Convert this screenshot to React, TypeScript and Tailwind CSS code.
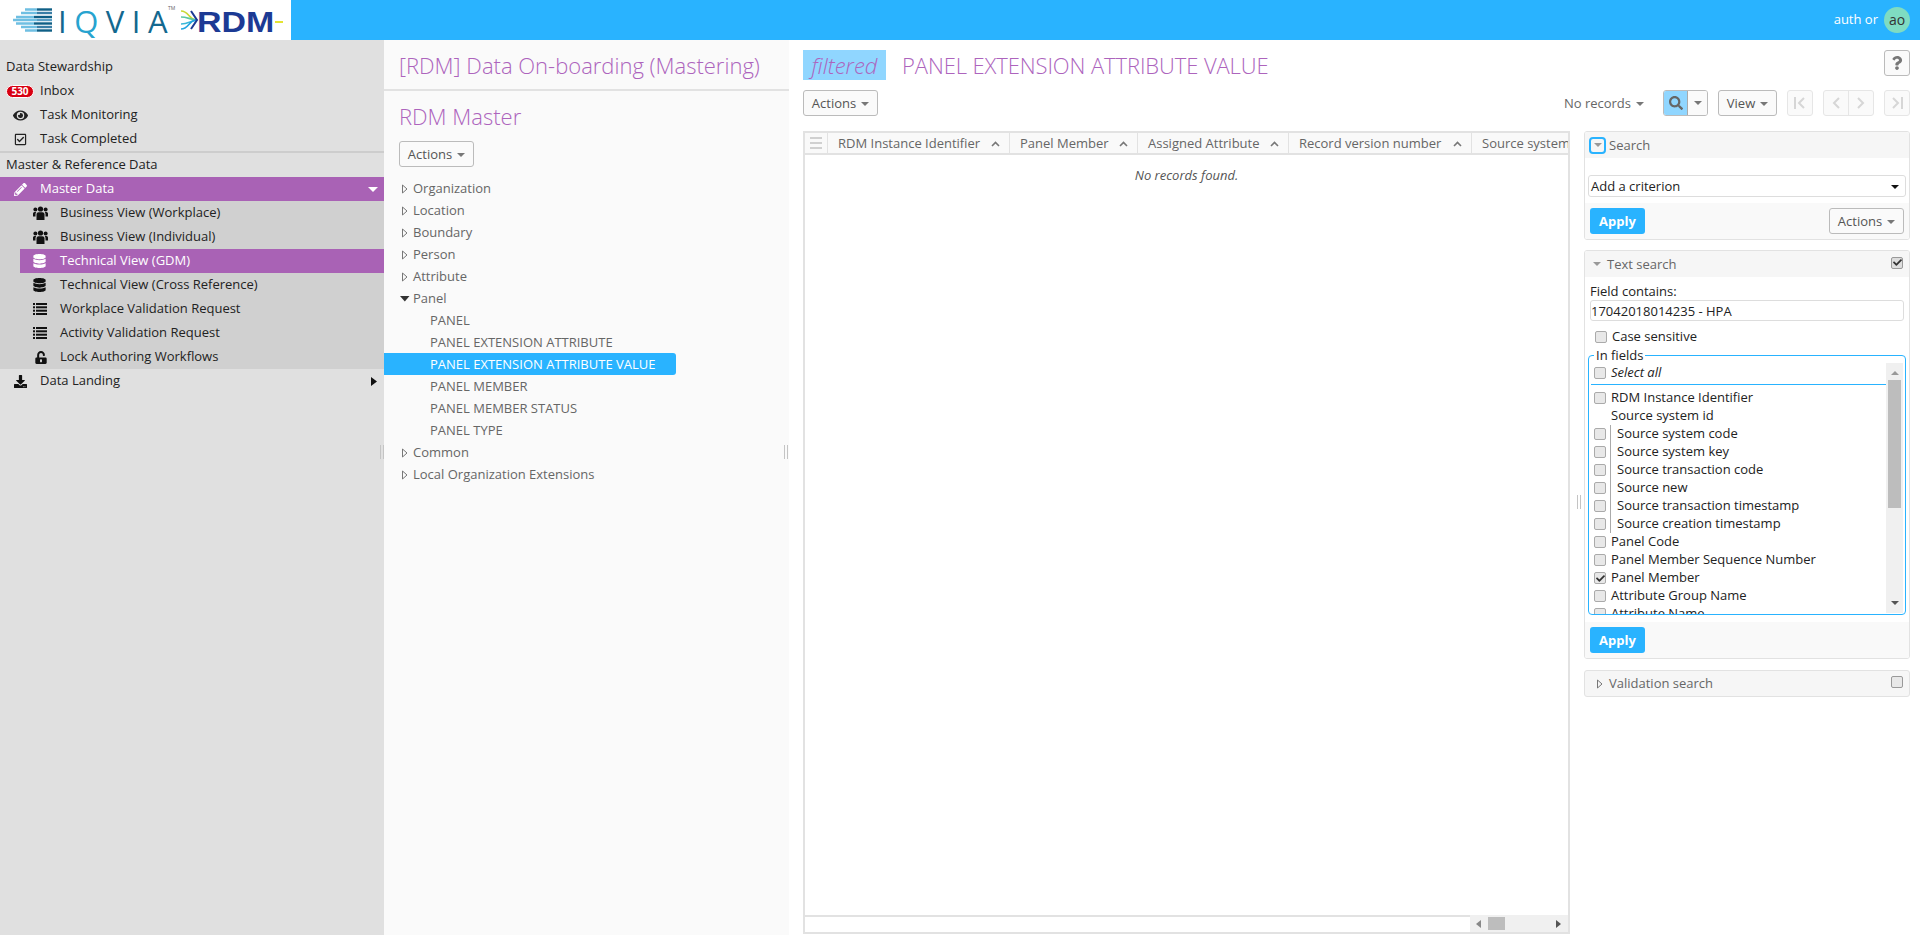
import { FaPencilAlt, FaEye, FaRegCheckSquare, FaDatabase, FaUnlockAlt, FaDownload, FaSearch, FaCheck, FaQuestion } from 'react-icons/fa';
import type { ReactNode } from 'react';

const font = "font-['Open_Sans',sans-serif]";

const Caret = ({ className = 'text-[#777]' }: { className?: string }) => (
  <svg width="8" height="4" viewBox="0 0 8 4" className={className}>
    <path d="M0 0h8L4 4z" fill="currentColor" />
  </svg>
);

const TreeArrow = ({ open = false }: { open?: boolean }) =>
  open ? (
    <svg width="10" height="10" viewBox="0 0 10 10" className="shrink-0">
      <path d="M0 2h9.5L4.8 7.5z" fill="#333" />
    </svg>
  ) : (
    <svg width="10" height="10" viewBox="0 0 10 10" className="shrink-0">
      <path d="M2.5 1 7 5 2.5 9z" fill="none" stroke="#777" />
    </svg>
  );

const UsersIcon = ({ className }: { className: string }) => (
  <svg viewBox="0 0 15 14" className={className}>
    <g fill="currentColor">
      <circle cx="7.5" cy="3" r="2.6" />
      <circle cx="2.4" cy="3.6" r="2" />
      <circle cx="12.6" cy="3.6" r="2" />
      <path d="M3.5 14V8.5c0-1.4 1-2.3 2-2.3h4c1 0 2 .9 2 2.3V14z" />
      <path d="M0 10.5V7.8c0-1 .7-1.8 1.5-1.8h1.8C2.7 6.600 2.500 7.500 2.500 8.500v2z" />
      <path d="M15 10.500V7.800c0-1-.7-1.800-1.500-1.800h-1.800c.6.600.8 1.500.8 2.500v2z" />
    </g>
  </svg>
);

const ListIcon = ({ className }: { className: string }) => (
  <svg viewBox="0 0 14 12" className={className}>
    <g fill="currentColor">
      <rect x="0" y="0" width="2" height="2" />
      <rect x="3" y="0" width="11" height="2" />
      <rect x="0" y="3.300" width="2" height="2" />
      <rect x="3" y="3.300" width="11" height="2" />
      <rect x="0" y="6.700" width="2" height="2" />
      <rect x="3" y="6.700" width="11" height="2" />
      <rect x="0" y="10" width="2" height="2" />
      <rect x="3" y="10" width="11" height="2" />
    </g>
  </svg>
);

const ActionsButton = () => (
  <button className="h-[26px] w-[75px] shrink-0 pt-[2px] rounded-[3px] border border-[#bbb] bg-[#fafafa] flex items-center justify-center gap-[5px] text-[13px] text-[#555]">
    Actions <Caret />
  </button>
);

const ApplyButton = () => (
  <button className="h-[26px] w-[55px] pt-[1px] rounded-[3px] bg-[#29b3ff] text-white text-[13px] font-bold">Apply</button>
);

const Check = ({ checked = false }: { checked?: boolean }) => (
  <span className="w-[12px] h-[12px] shrink-0 rounded-[2px] border border-[#aaa] bg-[#e8e8e8] flex items-center justify-center">
    {checked && <FaCheck className="w-[9px] h-[9px] text-[#333]" />}
  </span>
);

const NavItem = ({ icon, label, active, children }: { icon: ReactNode; label: string; active?: boolean; children?: ReactNode }) => (
  <div className={`h-6 flex items-center text-[13px] ${active ? 'bg-[#a962b5] text-white' : 'text-[#222]'}`}>
    <span className="w-10 flex justify-center shrink-0">{icon}</span>
    <span className="flex-1">{label}</span>
    {children}
  </div>
);

const SubItem = ({ icon, label, active }: { icon: ReactNode; label: string; active?: boolean }) => (
  <div className={`h-6 ml-5 flex items-center text-[13px] ${active ? 'bg-[#a962b5] text-white' : 'text-[#222]'}`}>
    <span className="w-10 pl-[13px] shrink-0 flex">{icon}</span>
    <span>{label}</span>
  </div>
);

const Sidebar = () => (
  <div className="w-[384px] shrink-0 bg-[#e0e0e0] pt-[15px]">
    <div className="h-6 pl-[6px] flex items-center text-[13px] text-[#222]">Data Stewardship</div>
    <NavItem
      label="Inbox"
      icon={<span className="px-[4px] h-[13px] rounded-full bg-[#d80012] border border-white text-white text-[10px] leading-[11px] font-bold">530</span>}
    />
    <NavItem label="Task Monitoring" icon={<FaEye className="w-[15px] h-[15px] text-[#222]" />} />
    <NavItem label="Task Completed" icon={<FaRegCheckSquare className="w-[13px] h-[13px] text-[#222]" />} />
    <div className="h-[2px] bg-[#cdcdcd]" />
    <div className="h-6 pl-[6px] flex items-center text-[13px] text-[#222]">Master &amp; Reference Data</div>
    <NavItem label="Master Data" active icon={<FaPencilAlt className="w-[13px] h-[13px] text-white" />}>
      <span className="pr-[6px] flex">
        <Caret className="text-white w-[10px] h-[5px]" />
      </span>
    </NavItem>
    <div className="bg-[#d0d0d0]">
      <SubItem label="Business View (Workplace)" icon={<UsersIcon className="w-[15px] h-[14px] text-[#111]" />} />
      <SubItem label="Business View (Individual)" icon={<UsersIcon className="w-[15px] h-[14px] text-[#111]" />} />
      <SubItem label="Technical View (GDM)" active icon={<FaDatabase className="w-[13px] h-[14px] text-white" />} />
      <SubItem label="Technical View (Cross Reference)" icon={<FaDatabase className="w-[13px] h-[14px] text-[#111]" />} />
      <SubItem label="Workplace Validation Request" icon={<ListIcon className="w-[14px] h-[12px] text-[#111]" />} />
      <SubItem label="Activity Validation Request" icon={<ListIcon className="w-[14px] h-[12px] text-[#111]" />} />
      <SubItem label="Lock Authoring Workflows" icon={<FaUnlockAlt className="w-[12px] h-[13px] ml-[2px] text-[#111]" />} />
    </div>
    <NavItem label="Data Landing" icon={<FaDownload className="w-[13px] h-[13px] text-[#111]" />}>
      <svg width="6" height="9" viewBox="0 0 6 9" className="mr-[7px]">
        <path d="M0 0l6 4.5L0 9z" fill="#111" />
      </svg>
    </NavItem>
  </div>
);

const treeTop = ['Organization', 'Location', 'Boundary', 'Person', 'Attribute'];
const treeChildren = ['PANEL', 'PANEL EXTENSION ATTRIBUTE', 'PANEL EXTENSION ATTRIBUTE VALUE', 'PANEL MEMBER', 'PANEL MEMBER STATUS', 'PANEL TYPE'];

const TreeRow = ({ label, open }: { label: string; open?: boolean }) => (
  <div className="h-[22px] pt-[2px] pl-[16px] flex items-center gap-[3px] text-[13px] text-[#666]">
    <TreeArrow open={open} />
    <span>{label}</span>
  </div>
);

const TreePanel = () => (
  <div className="w-[405px] shrink-0 bg-[#fafafa]">
    <div className="h-[51px] border-b-2 border-[#e2e2e2] pl-[15px] pt-[8px] text-[22px] leading-[34px] font-light text-[#ad64bd]">
      [RDM] Data On-boarding (Mastering)
    </div>
    <div className="pl-[15px] pt-[8px] text-[22px] leading-[34px] font-light text-[#ad64bd]">RDM Master</div>
    <div className="pl-[15px] mt-[8px] mb-[10px]">
      <ActionsButton />
    </div>
    {treeTop.map((t) => (
      <TreeRow key={t} label={t} />
    ))}
    <TreeRow label="Panel" open />
    {treeChildren.map((c, i) => (
      <div
        key={c}
        className={`h-[22px] w-[292px] pt-[2px] pl-[46px] flex items-center text-[13px] rounded-r-[3px] ${i === 2 ? 'bg-[#29b3ff] text-white' : 'text-[#666]'}`}
      >
        {c}
      </div>
    ))}
    <TreeRow label="Common" />
    <TreeRow label="Local Organization Extensions" />
  </div>
);

const columns = [
  { label: 'RDM Instance Identifier', w: 'w-[182px]' },
  { label: 'Panel Member', w: 'w-[128px]' },
  { label: 'Assigned Attribute', w: 'w-[151px]' },
  { label: 'Record version number', w: 'w-[183px]' },
];

const SortArrow = () => (
  <svg width="9" height="6" viewBox="0 0 9 6" className="shrink-0">
    <path d="M1 5l3.500-3.500L8 5" fill="none" stroke="#777" strokeWidth="1.600" />
  </svg>
);

const DataTable = () => (
  <div className="flex-1 flex flex-col mt-[15px] mb-px min-h-0 border-2 border-[#e2e2e2] text-[13px]">
    <div className="h-[22px] shrink-0 flex border-b-2 border-[#e2e2e2] bg-[#f9f9f9] text-[#666] overflow-hidden">
      <div className="w-[23px] shrink-0 border-r border-[#e2e2e2] flex flex-col justify-center gap-[3px] px-[5px]">
        <span className="h-[2px] bg-[#d0d0d0]" />
        <span className="h-[2px] bg-[#d0d0d0]" />
        <span className="h-[2px] bg-[#d0d0d0]" />
      </div>
      {columns.map((c) => (
        <div key={c.label} className={`${c.w} shrink-0 border-r border-[#e2e2e2] pt-[2px] pl-[10px] pr-[9px] flex items-center justify-between`}>
          <span className="whitespace-nowrap">{c.label}</span>
          <SortArrow />
        </div>
      ))}
      <div className="pl-[10px] pt-[2px] whitespace-nowrap flex items-center">Source system key</div>
    </div>
    <div className="flex-1 text-center italic text-[#555] pt-[11px] leading-[18px]">No records found.</div>
    <div className="h-[17px] shrink-0 flex border-t-2 border-[#e2e2e2]">
      <div className="flex-1" />
      <div className="w-[98px] -mt-[2px] bg-[#f0f0f0] flex items-center pl-[6px] pr-[7px]">
        <svg width="5" height="8" viewBox="0 0 5 8">
          <path d="M5 0v8L0 4z" fill="#888" />
        </svg>
        <span className="ml-[7px] w-[17px] h-[13px] bg-[#bdbdbd]" />
        <svg width="5" height="8" viewBox="0 0 5 8" className="ml-auto">
          <path d="M0 0v8l5-4z" fill="#555" />
        </svg>
      </div>
    </div>
  </div>
);

const PageIcon = ({ d }: { d: string }) => (
  <svg width="14" height="14" viewBox="0 0 14 14">
    <path d={d} fill="none" stroke="#d6d6d6" strokeWidth="2" />
  </svg>
);

const Toolbar = () => (
  <div className="mt-[4px] flex items-center h-[26px] shrink-0">
    <ActionsButton />
    <div className="ml-auto pt-[2px] flex items-center gap-[5px] text-[13px] text-[#666]">
      No records <Caret />
    </div>
    <div className="ml-[19px] flex h-[26px] rounded-[3px] border border-[#bbb] overflow-hidden">
      <span className="w-[24px] bg-[#90d6ff] border-r border-[#aaa] flex items-center justify-center">
        <FaSearch className="w-[14px] h-[14px] text-[#666]" />
      </span>
      <span className="w-[19px] bg-[#fafafa] flex items-center justify-center">
        <Caret />
      </span>
    </div>
    <button className="ml-[10px] h-[26px] w-[59px] pt-[2px] rounded-[3px] border border-[#bbb] bg-[#fafafa] flex items-center justify-center gap-[5px] text-[13px] text-[#555]">
      View <Caret />
    </button>
    <span className="ml-[10px] w-[26px] h-[26px] rounded-[3px] border border-[#e6e6e6] bg-[#fafafa] flex items-center justify-center">
      <PageIcon d="M2 1v12M11 2 6 7l5 5" />
    </span>
    <div className="ml-[10px] flex w-[51px] h-[26px] rounded-[3px] border border-[#e6e6e6] bg-[#fafafa]">
      <span className="flex-1 border-r border-[#e6e6e6] flex items-center justify-center">
        <PageIcon d="M10 2 5 7l5 5" />
      </span>
      <span className="flex-1 flex items-center justify-center">
        <PageIcon d="M4 2l5 5-5 5" />
      </span>
    </div>
    <span className="ml-[10px] w-[26px] h-[26px] rounded-[3px] border border-[#e6e6e6] bg-[#fafafa] flex items-center justify-center">
      <PageIcon d="M12 1v12M3 2l5 5-5 5" />
    </span>
  </div>
);

const CenterPanel = () => (
  <div className="flex-1 min-w-0 flex flex-col bg-white pl-[14px]">
    <div className="flex items-start justify-between pt-[10px] pr-[10px] h-[46px] shrink-0">
      <div className="flex items-center gap-[16px]">
        <span className="w-[83px] h-[30px] bg-[#90d6ff] text-center italic font-light text-[22px] leading-[30px] text-[#ad64bd]">filtered</span>
        <span className="text-[22px] leading-[30px] font-light tracking-[-0.1px] text-[#ad64bd]">PANEL EXTENSION ATTRIBUTE VALUE</span>
      </div>
      <span className="w-[26px] h-[26px] rounded-[3px] border border-[#bbb] bg-[#fafafa] flex items-center justify-center">
        <FaQuestion className="w-[12px] h-[14px] text-[#777]" />
      </span>
    </div>
    <div className="pr-[10px]">
      <Toolbar />
    </div>
    <div className="flex-1 min-h-0 flex">
      <div className="w-[767px] shrink-0 flex flex-col">
        <DataTable />
      </div>
      <SearchColumn />
    </div>
  </div>
);

const fields = [
  { label: 'RDM Instance Identifier' },
  { label: 'Source system id', group: true },
  { label: 'Source system code', sub: true },
  { label: 'Source system key', sub: true },
  { label: 'Source transaction code', sub: true },
  { label: 'Source new', sub: true },
  { label: 'Source transaction timestamp', sub: true },
  { label: 'Source creation timestamp', sub: true },
  { label: 'Panel Code' },
  { label: 'Panel Member Sequence Number' },
  { label: 'Panel Member', checked: true },
  { label: 'Attribute Group Name' },
  { label: 'Attribute Name' },
];

const FieldRow = ({ label, group, sub, checked }: { label: string; group?: boolean; sub?: boolean; checked?: boolean }) => (
  <div className="h-[18px] shrink-0 flex items-center gap-[5px] pl-[3px]">
    {group ? <span className="w-[12px]" /> : <Check checked={checked} />}
    {sub && <span className="w-px h-[18px] bg-[#aaa] -ml-[1px] mr-[1px]" />}
    <span>{label}</span>
  </div>
);

const FieldList = () => (
  <fieldset className="mx-[3px] -mt-[1px] h-[265px] border border-[#29b3ff] rounded-[4px]">
    <legend className="ml-[5px] px-[2px] leading-[10px] text-[13px]">In fields</legend>
    <div className="h-[254px] flex overflow-hidden pl-[2px] pr-[2px]">
      <div className="flex-1 min-w-0 flex flex-col overflow-hidden">
        <div className="h-[25px] pt-[2px] shrink-0 flex items-center gap-[5px] pl-[3px] border-b border-[#29b3ff] italic">
          <Check /> <span>Select all</span>
        </div>
        <div className="h-[4px] shrink-0" />
        {fields.map((f) => (
          <FieldRow key={f.label} {...f} />
        ))}
      </div>
      <div className="w-[17px] shrink-0 mt-[3px] mb-[1px] bg-[#f0f0f0] flex flex-col items-center">
        <svg width="8" height="4" viewBox="0 0 8 4" className="mt-[8px] mb-[5px]">
          <path d="M0 4h8L4 0z" fill="#999" />
        </svg>
        <span className="w-[13px] h-[128px] bg-[#bdbdbd]" />
        <svg width="8" height="4" viewBox="0 0 8 4" className="mt-auto mb-[8px]">
          <path d="M0 0h8L4 4z" fill="#555" />
        </svg>
      </div>
    </div>
  </fieldset>
);

const SearchColumn = () => (
  <div className="w-[326px] ml-[14px] shrink-0 pt-[15px] text-[13px] text-[#222]">
    <div className="border border-[#e2e2e2] rounded-[3px] overflow-hidden">
      <div className="h-[26px] bg-[#f6f6f6] flex items-center gap-[3px] pl-[4px] text-[#666]">
        <span className="w-[17px] h-[17px] rounded-[4px] border-2 border-[#29b3ff] flex items-center justify-center">
          <Caret className="text-[#999]" />
        </span>
        <span className="pt-[1px]">Search</span>
      </div>
      <div className="bg-white pt-[17px] pb-[6px] px-[3px]">
        <div className="h-[22px] pt-[1px] rounded-[3px] border border-[#ddd] flex items-center justify-between pl-[2px] pr-[6px]">
          Add a criterion
          <Caret className="text-[#111]" />
        </div>
      </div>
      <div className="h-[36px] bg-[#f9f9f9] flex items-center justify-between px-[5px]">
        <ApplyButton />
        <ActionsButton />
      </div>
    </div>
    <div className="mt-[10px] border border-[#e2e2e2] rounded-[3px] overflow-hidden">
      <div className="h-[26px] bg-[#f6f6f6] flex items-center gap-[6px] pl-[8px] pr-[6px] text-[#666]">
        <Caret className="text-[#999]" />
        <span className="flex-1 pt-[1px]">Text search</span>
        <span className="w-[12px] h-[12px] rounded-[2px] border border-[#999] bg-[#ddd] flex items-center justify-center -mt-[3px]">
          <FaCheck className="w-[9px] h-[9px] text-[#333]" />
        </span>
      </div>
      <div className="bg-white pb-[7px]">
        <div className="pl-[5px] pt-[5px] leading-[18px]">Field contains:</div>
        <div className="mx-[5px] h-[21px] rounded-[3px] border border-[#ddd] leading-[21px]">17042018014235 - HPA</div>
        <div className="h-[30px] pt-[2px] flex items-center gap-[5px] pl-[10px]">
          <Check />
          Case sensitive
        </div>
        <FieldList />
      </div>
      <div className="h-[36px] bg-[#f9f9f9] flex items-center px-[5px]">
        <ApplyButton />
      </div>
    </div>
    <div className="mt-[11px] h-[27px] border border-[#e2e2e2] rounded-[3px] bg-[#f6f6f6] flex items-center gap-[6px] pl-[10px] pr-[6px] text-[#666]">
      <TreeArrow />
      <span className="flex-1 -ml-[2px]">Validation search</span>
      <span className="w-[12px] h-[12px] rounded-[2px] border border-[#999] bg-[#e8e8e8] -mt-[3px]" />
    </div>
  </div>
);

const Logo = () => (
  <div className="w-[291px] h-10 bg-white shrink-0 flex items-center pl-[13px]">
    <svg width="40" height="24" viewBox="0 0 40 24" className="shrink-0">
      <g strokeWidth="2.400">
        <path d="M24 1.500h15" stroke="#0f5f86" />
        <path d="M12 1.500h12M8 5h16M3 9h18M0 12h24M3 15.500h18M8 19h16M12 22.500h12" stroke="#6fbfe2" />
        <path d="M24 5h15" stroke="#3a7ea6" />
        <path d="M21 9h18" stroke="#0f5f86" />
        <path d="M24 12h15" stroke="#5a9ec4" />
        <path d="M21 15.500h18" stroke="#0f5f86" />
        <path d="M24 19h15" stroke="#3a7ea6" />
        <path d="M24 22.500h15" stroke="#0f5f86" />
      </g>
    </svg>
    <span className="ml-[5px] mt-[2px] w-[111px] shrink-0 text-[31px] leading-[40px] tracking-[7.500px] whitespace-nowrap text-[#13688f]">
      I<span className="text-[#27a3cf]">Q</span>VI<span className="tracking-normal">A</span>
    </span>
    <span className="ml-[-1px] mb-[24px] w-[9px] text-[5px] leading-[6px] text-[#666]">TM</span>
    <svg width="18" height="22" viewBox="0 0 18 22" className="shrink-0 ml-[4px]">
      <g fill="none" strokeWidth="1.600">
        <path d="M0 2c8 0 7 8 15 9" stroke="#c9d832" />
        <path d="M0 8c6 0 8 2 15 3" stroke="#5cc8a0" />
        <path d="M0 15c6 0 8-2 15-4" stroke="#3bb8d8" />
        <path d="M0 20c8 0 7-8 15-9" stroke="#23a5e0" />
      </g>
      <path d="M10 2l6 9-6 9" fill="none" stroke="#1c3a94" strokeWidth="2" />
    </svg>
    <span className="w-[78px] shrink-0 -ml-[2px] mt-[3px] text-[29px] leading-[36px] font-black origin-left scale-x-[1.17] text-[#1c3a94] font-['Liberation_Sans',sans-serif]">RDM</span>
    <span className="w-[8px] h-[2px] mt-[4px] bg-[#e4e431]" />
  </div>
);

const Handle = ({ className }: { className: string }) => (
  <span className={`absolute w-[4px] h-[14px] border-x border-[#c4c4c4] ${className}`} />
);

export default function App() {
  return (
    <div className={`${font} w-[1920px] h-[935px] flex flex-col overflow-hidden bg-white relative`}>
      <div className="h-10 shrink-0 bg-[#29b3ff] flex items-center">
        <Logo />
        <div className="ml-auto pr-[10px] flex items-center gap-[6px]">
          <span className="text-white text-[13px]">auth or</span>
          <span className="w-[26px] h-[26px] rounded-full bg-[#7fdcc2] text-[#333] text-[14px] leading-[26px] text-center">ao</span>
        </div>
      </div>
      <div className="flex-1 min-h-0 flex">
        <Sidebar />
        <TreePanel />
        <CenterPanel />
      </div>
      <Handle className="left-[380px] top-[445px]" />
      <Handle className="left-[784px] top-[445px]" />
      <Handle className="left-[1577px] top-[495px]" />
    </div>
  );
}
